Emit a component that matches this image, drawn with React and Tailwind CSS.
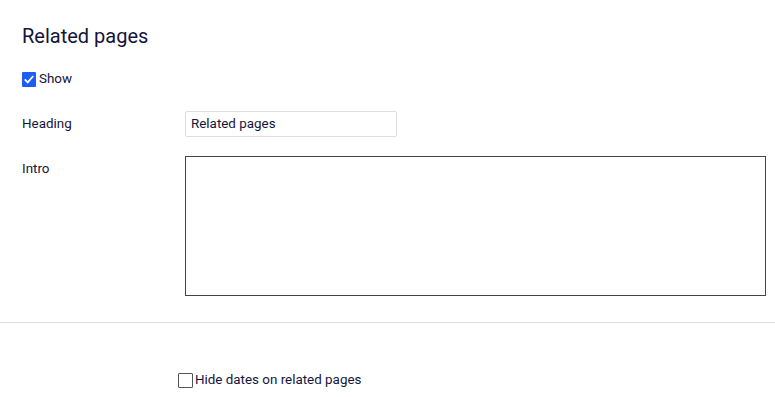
export default function App() {
  return (
    <div className="min-h-screen bg-white text-[#14143c]" style={{ fontFamily: 'Roboto, "Liberation Sans", sans-serif' }}>
      <div className="pl-[22px] pt-[22px]">
        <h2 className="text-[20px] leading-[28px]">Related pages</h2>

        <label className="mt-[21px] flex items-center h-4 text-[13.4px]">
          <span className="flex items-center justify-center w-[14px] h-[15px] bg-[#1d5cf5] rounded-[1px]">
            <svg viewBox="0 0 14 14" className="w-[12px] h-[12px]" fill="none" stroke="white" strokeWidth="2">
              <path d="M2 7.5 L5.5 11 L12 3.5" />
            </svg>
          </span>
          <span className="ml-[3px]">Show</span>
        </label>

        <div className="mt-[24px] flex items-center text-[13.4px]">
          <div className="w-[163px] shrink-0">Heading</div>
          <div className="w-[212px] shrink-0 h-[26px] border border-[#dedede] rounded-[2px] px-[5px] flex items-center">Related pages</div>
        </div>

        <div className="mt-[19px] flex text-[13.4px]">
          <div className="w-[163px] shrink-0 pt-[3px]">Intro</div>
          <div className="w-[581px] shrink-0 h-[140px] border border-[#444]" />
        </div>
      </div>

      <div className="mt-[26px] border-t border-[#dddddd]" />

      <label className="mt-[48px] ml-[178px] flex items-center text-[13.4px]">
        <span className="w-[15px] h-[15px] border border-[#555] rounded-[1px]" />
        <span className="ml-[2px] -mt-[1px]">Hide dates on related pages</span>
      </label>
    </div>
  );
}
